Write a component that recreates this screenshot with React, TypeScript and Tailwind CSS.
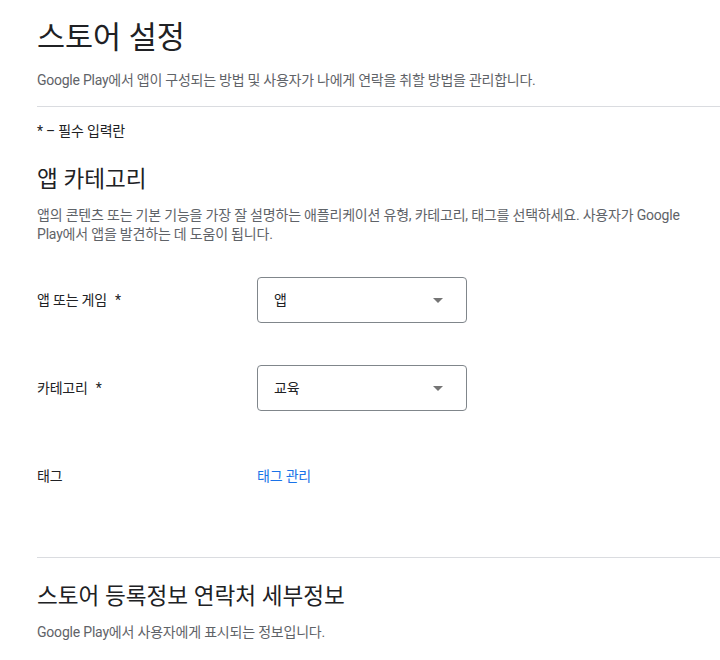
const font = "font-['Roboto','Noto_Sans_CJK_KR',sans-serif]";

function Select({ value }: { value: string }) {
  return (
    <div className="flex h-[46px] w-[210px] items-center justify-between rounded-[4px] border border-[#80868b] pl-4 pr-[23px]">
      <span className="text-[14px] tracking-[-0.2px] text-[#202124]">{value}</span>
      <svg width="10" height="5" viewBox="0 0 10 5">
        <path d="M0 0 L10 0 L5 5 Z" fill="#757575" />
      </svg>
    </div>
  );
}

function Row({ label, req, children }: { label: string; req?: boolean; children: React.ReactNode }) {
  return (
    <div className="flex h-[88px] items-center">
      <div className="w-[220px] text-[14px] tracking-[-0.2px] text-[#202124]">
        {label}
        {req && <span className="ml-[8px]">*</span>}
      </div>
      {children}
    </div>
  );
}

export default function App() {
  return (
    <div className={`${font} min-h-[660px] bg-white pl-[37px] text-[#202124]`}>
      <h1 className="pt-[18px] text-[30.5px] leading-[40px] font-normal">스토어 설정</h1>
      <p className="mt-[12px] text-[14px] leading-[20px] tracking-[-0.25px] text-[#5f6368]">
        Google Play에서 앱이 구성되는 방법 및 사용자가 나에게 연락을 취할 방법을 관리합니다.
      </p>
      <div className="mt-[16px] border-t border-[#dadce0]" />
      <p className="mt-[14px] text-[14px] leading-[20px] tracking-[-0.2px]">* – 필수 입력란</p>

      <h2 className="mt-[23px] text-[22.6px] leading-[32px] font-normal">앱 카테고리</h2>
      <p className="mt-[10px] w-[660px] break-keep text-[14px] leading-[19px] tracking-[-0.2px] text-[#5f6368]">
        앱의 콘텐츠 또는 기본 기능을 가장 잘 설명하는 애플리케이션 유형, 카테고리, 태그를 선택하세요. 사용자가 Google Play에서 앱을 발견하는 데 도움이 됩니다.
      </p>

      <div className="mt-[12px]">
        <Row label="앱 또는 게임" req>
          <Select value="앱" />
        </Row>
        <Row label="카테고리" req>
          <Select value="교육" />
        </Row>
        <Row label="태그">
          <a className="text-[14px] tracking-[-0.2px] text-[#1a73e8]">태그 관리</a>
        </Row>
      </div>

      <div className="mt-[37px] border-t border-[#dadce0]" />
      <h2 className="mt-[23px] text-[22.6px] leading-[32px] font-normal">스토어 등록정보 연락처 세부정보</h2>
      <p className="mt-[9px] text-[14px] leading-[20px] tracking-[-0.2px] text-[#5f6368]">
        Google Play에서 사용자에게 표시되는 정보입니다.
      </p>
    </div>
  );
}
